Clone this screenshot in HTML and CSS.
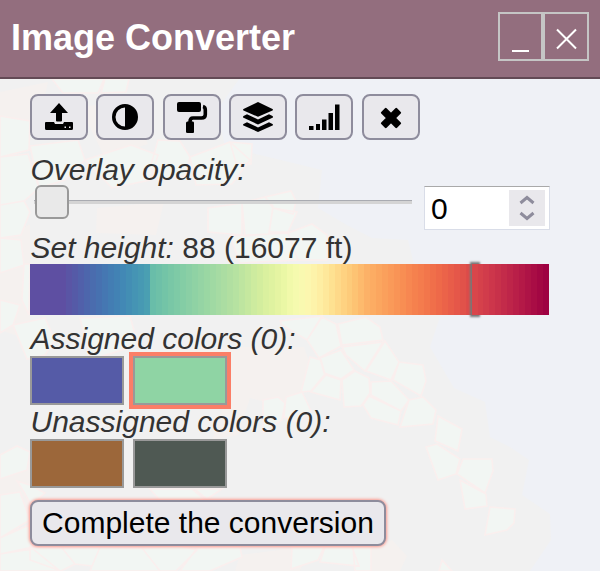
FILE: index.html
```html
<!DOCTYPE html>
<html lang="en">
<head>
<meta charset="utf-8">
<title>Image Converter</title>
<link rel="stylesheet" href="styles.css">
</head>
<body>
<div class="dialog">
  <svg class="map" viewBox="0 0 600 571" aria-hidden="true">
    <path class="shelf" d="M0 78H240L217 110L225 147L260 155L322 170L318 208L345 224L372 238L408 240L419 285L442 311L430 347L454 388L485 402L490 437L510 447L529 460L522 495L550 514L551 540L530 571H0Z"/>
    <g class="dry">
      <path d="M0 92L48 82L38 125L0 130ZM80 107L130 101L148 144L105 158ZM97 208L164 202L156 235L96 233ZM0 240L30 224L30 340L0 330ZM170 347L304 347L311 367L302 390L280 406L250 398L238 435L212 440L222 410L232 380L170 398ZM0 480L32 460L30 520L0 525ZM240 555L310 546L300 571H235ZM370 550L392 540L407 556L400 571H370Z"/>
    </g>
    <g class="cells">
      <path d="M52 79L104 79L98 93L63 93ZM105 79H129L126 92L101 93ZM0 116L30 121L29 150L0 157ZM0 157L28 154L39 188L24 201L0 205ZM0 205L24 201L30 212L21 235L0 238ZM30 146L78 140L85 160L65 180L39 188ZM85 160L131 145L158 155L150 180L112 188ZM158 140L180 141L190 157L185 176L159 180L150 168ZM190 157L230 142L250 160L232 184L196 185ZM230 142L252 144L251 164L236 163ZM208 208L242 203L242 235L208 232ZM242 203L265 197L273 206L269 234L245 236ZM265 197L291 191L296 201L293 214L273 208ZM273 208L297 212L288 232L269 232ZM230 236L288 233L298 260L240 263ZM288 233L312 224L327 235L327 260L298 260Z"/>
      <path d="M0 238L21 240L24 265L0 273ZM24 264L30 264L29 315L22 300ZM0 300L20 305L13 325L0 333ZM13 325L45 318L55 340L45 355L27 359ZM80 318L130 316L138 345L90 360ZM280 321L322 316L307 340L282 325ZM322 317L336 324L341 346L319 358L307 340ZM338 324L366 317L380 327L383 340L342 345ZM342 347L383 342L365 371L346 355ZM385 341L399 362L391 380L366 371ZM399 362L423 365L426 381L421 396L393 380ZM310 357L321 360L325 374L311 391L301 392ZM320 358L341 350L354 370L341 379L324 373ZM326 375L341 380L340 400L311 392ZM342 380L355 371L369 378L370 393L361 406L344 407ZM371 382L391 381L409 400L401 411L371 395ZM369 396L401 411L398 425L371 418L363 405ZM409 400L423 397L436 410L433 424L400 427ZM438 416L462 429L458 451L435 441ZM426 447L437 444L460 459L456 474L438 480ZM463 459L492 459L493 471L485 493L457 474ZM460 480L486 494L487 506L465 509ZM490 507L515 509L514 523L507 530L485 535ZM263 400L278 397L285 403L282 420L263 432ZM286 397L302 392L311 411L299 423L284 417Z"/>
      <path d="M0 455L17 446L30 452L27 470L0 479ZM17 481L30 485L45 493L31 505L24 492ZM150 489H192L205 500L170 512ZM195 489H222L207 499ZM0 495L20 492L30 520L0 538ZM0 538L29 525L33 547L0 554ZM0 554L33 549L60 571H0ZM30 547L62 548L75 564L61 571L30 560ZM62 548L100 547L92 566L75 564ZM100 547L142 548L160 571H90ZM142 548L180 546L197 550L176 571H160ZM197 548L240 547L242 557L210 571H180ZM292 547H324L318 560L291 569ZM325 547H352L359 566L320 562ZM353 547H371V571H355ZM442 560L452 571H439Z"/>
    </g>
  </svg>
  <header class="titlebar">
    <h1 class="title">Image Converter</h1>
    <div class="window-buttons">
      <button class="window-button" aria-label="Minimize"><svg viewBox="0 0 41 45"><path d="M12 37H29"/></svg></button>
      <button class="window-button" aria-label="Close"><svg viewBox="0 0 41 45"><path d="M12 15.500L31 34.500M31 15.500L12 34.500"/></svg></button>
    </div>
  </header>
  <main class="content">
    <div class="tools">
      <button class="tool" aria-label="Upload"><svg viewBox="0 0 54 42"><path d="M27 7L36 17H30V24.500Q30 25.500 29 25.500H25Q24 25.500 24 24.500V17H18Z"/><path fill-rule="evenodd" d="M14 26H22L23 28H31L32 26H40Q41 26 41 27V32.500Q41 34 39.500 34H14.500Q13 34 13 32.500V27Q13 26 14 26ZM32.500 30.500V32H34V30.500ZM37 30.500V32H38.500V30.500Z"/></svg></button>
      <button class="tool" aria-label="Contrast"><svg viewBox="0 0 54 42"><path fill-rule="evenodd" d="M27 8A13 13 0 1 0 27 34A13 13 0 1 0 27 8ZM27 11.500V30.500A9.500 9.500 0 0 1 27 11.500Z"/></svg></button>
      <button class="tool" aria-label="Paint"><svg viewBox="0 0 54 42"><rect x="12" y="6" width="24" height="10" rx="2"/><path class="line" d="M38 10.500Q40.300 11 40.300 14V18.500Q40.300 22 36.500 22H28Q25 22 25 26"/><path d="M22.500 25.500H28Q29 25.500 29 27V36Q29 37 28 37H22.500Q21 37 21 36V27Q21 25.500 22.500 25.500Z"/></svg></button>
      <button class="tool" aria-label="Layers"><svg viewBox="0 0 54 42"><path d="M12.500 13L27 6L41.500 13Q42.500 13.800 41.500 14.500L27 20.800L12.500 14.500Q11.500 13.800 12.500 13ZM12.500 20L16 18.300L27 23.500L38 18.300L41.500 20Q42.500 21 41.500 21.800L27 28.500L12.500 21.800Q11.500 21 12.500 20ZM12.500 28L16 26.300L27 31.500L38 26.300L41.500 28Q42.500 29 41.500 29.500L27 36L12.500 29.500Q11.500 29 12.500 28Z"/></svg></button>
      <button class="tool" aria-label="Heights"><svg viewBox="0 0 54 42"><path d="M12 30H16.500V34H12ZM19 28H23V34H19ZM25 23.500H29.500V34H25ZM31.500 17H36V34H31.500ZM38 8.500H42.500V34H38Z"/></svg></button>
      <button class="tool" aria-label="Cancel"><svg viewBox="0 0 54 42"><path class="cross" transform="translate(27 22) rotate(45)" d="M-2.600 -10H2.600V-2.600H10V2.600H2.600V10H-2.600V2.600H-10V-2.600H-2.600Z"/></svg></button>
    </div>
    <div class="label opacity-label"><i>Overlay opacity:</i></div>
    <div class="opacity">
      <div class="slider"><div class="thumb"></div></div>
      <div class="number"><span>0</span><svg class="spinner" viewBox="0 0 36 36"><path d="M11.500 13L18 7.500L24.500 13M11.500 23L18 28.500L24.500 23"/></svg></div>
    </div>
    <div class="label height-label"><i>Set height:</i> 88 (16077 ft)</div>
    <div class="scale" id="scale"></div>
    <div class="label assigned-label"><i>Assigned colors (0):</i></div>
    <div class="swatches"><div class="swatch indigo"></div><div class="swatch green selected"></div></div>
    <div class="label unassigned-label"><i>Unassigned colors (0):</i></div>
    <div class="swatches"><div class="swatch brown"></div><div class="swatch slate"></div></div>
    <button class="complete">Complete the conversion</button>
  </main>
</div>
<script src="scale.js"></script>
</body>
</html>
```
FILE: styles.css
```css
* { box-sizing: border-box; }
body { margin: 0; font-family: "Liberation Sans", Arial, sans-serif; color: #333; }
button { font: inherit; color: #000; padding: 0; }
svg { display: block; }
.dialog { position: relative; width: 600px; height: 571px; overflow: hidden; background: #eff1f6; }
.map { position: absolute; inset: 0; width: 600px; height: 571px; }
.shelf { fill: #f1f1f1; }
.dry { fill: #f5f1ef; }
.cells { fill: #f2f6f3; stroke: #faefee; stroke-width: 1.6; }
.titlebar { position: relative; display: flex; justify-content: space-between; height: 79px; padding: 12px 11px 0 11px; background: #936e7e; border-bottom: 2px solid #634a55; }
.title { margin: 4px 0 0; color: #fff; font-size: 36px; line-height: 43px; white-space: nowrap; }
.window-buttons { display: flex; }
.window-button { width: 45px; height: 49px; border: 2px solid #c5c5c5; background: none; }
.window-button + .window-button { width: 46px; }
.window-button svg { width: 41px; height: 45px; fill: none; stroke: #fff; stroke-width: 2; }
.content { position: relative; padding: 15px 0 0 30px; }
.tools { display: grid; grid-template-columns: 66px 67px 66px 66px 67px 58px; }
.tool { width: 58px; height: 46px; border: 2px solid #8e8c9c; border-radius: 8px; background: #e9e8ec; }
.tool svg { width: 54px; height: 42px; }
.line { fill: none; stroke: #000; stroke-width: 3.6; }
.cross { stroke: #000; stroke-width: 2.4; stroke-linejoin: round; }
.label { padding-left: 0.5px; font-size: 30px; line-height: 34px; white-space: nowrap; }
.opacity-label { margin-top: 13px; }
.opacity { display: flex; height: 43px; margin-top: -1px; }
.slider { width: 378px; height: 4px; margin: 14px 12px 0 4px; border-top: 1px solid #a9abb1; background: #d4d4d4; }
.thumb { width: 34px; height: 34px; margin: -16px 0 0 1px; border: 2px solid #999; border-radius: 6px; background: #e9e9e9; }
.number { display: flex; justify-content: space-between; width: 126px; height: 44px; padding: 3px 4px 0 6px; border: 1px solid #d9dde8; border-top-color: #a9a9a9; background: #fff; color: #000; font-size: 30px; line-height: 38px; }
.spinner { width: 36px; height: 36px; background: #e9e8ec; fill: none; stroke: #8e8c9c; stroke-width: 3; }
.height-label { margin-top: 2px; }
.scale { display: grid; grid-template-columns: repeat(20, 6px) repeat(67, 1fr); width: 519px; height: 51px; margin-top: -1px; }
.step.current { box-shadow: 0 0 2px 2px #777; }
.assigned-label { margin-top: 7px; }
.swatches { display: flex; gap: 9px; }
.swatch { width: 94px; height: 49px; border: 2px solid #999; }
.indigo { background: #555ba7; }
.green { background: #8fd4a4; }
.brown { background: #9c673a; }
.slate { background: #4f5953; }
.selected { outline: 4px solid #fb7e67; }
.complete { width: 356px; height: 46px; margin-top: 12px; border: 2px solid #8e8c9c; border-radius: 8px; background: #e9e8ec; box-shadow: 0 0 3px 1px #fb9b90; font-size: 30px; }
```
FILE: scale.js
```js
// Spectral colour ramp, smoothed with a uniform B-spline.
const ramp = ["5e4fa2", "3288bd", "66c2a5", "abdda4", "e6f598", "ffffbf", "fee08b", "fdae61", "f46d43", "d53e4f", "9e0142"]
  .map(h => [0, 2, 4].map(i => parseInt(h.slice(i, i + 2), 16)));
function spectral(t) {
  const n = ramp.length - 1;
  const i = Math.min(n - 1, Math.floor(t * n));
  const u = t * n - i;
  const rgb = [0, 1, 2].map(c => {
    const v1 = ramp[i][c], v2 = ramp[i + 1][c];
    const v0 = i > 0 ? ramp[i - 1][c] : 2 * v1 - v2;
    const v3 = i < n - 1 ? ramp[i + 2][c] : 2 * v2 - v1;
    return Math.round(((1 - u) ** 3 * v0 + (4 - 6 * u * u + 3 * u ** 3) * v1 + (1 + 3 * u + 3 * u * u - 3 * u ** 3) * v2 + u ** 3 * v3) / 6);
  });
  return `rgb(${rgb})`;
}
// Step index to ramp position; the water steps end at 20.
const stops = [[20, 0.2], [34, 0.32], [41.7, 0.42], [46, 0.51], [50.5, 0.6], [56, 0.69], [66, 0.79], [74, 0.88], [86, 1]];
function position(k) {
  if (k < 20) return Math.max(0, (k - 5) / 100);
  const j = Math.max(1, stops.findIndex(s => s[0] >= k));
  const [k0, t0] = stops[j - 1], [k1, t1] = stops[j];
  return t0 + (t1 - t0) * (k - k0) / (k1 - k0);
}
const scale = document.getElementById("scale");
for (let k = 0; k < 87; k++) {
  const step = document.createElement("div");
  step.className = k === 74 ? "step current" : "step";
  step.style.background = spectral(Math.min(1, position(k)));
  scale.append(step);
}
```
